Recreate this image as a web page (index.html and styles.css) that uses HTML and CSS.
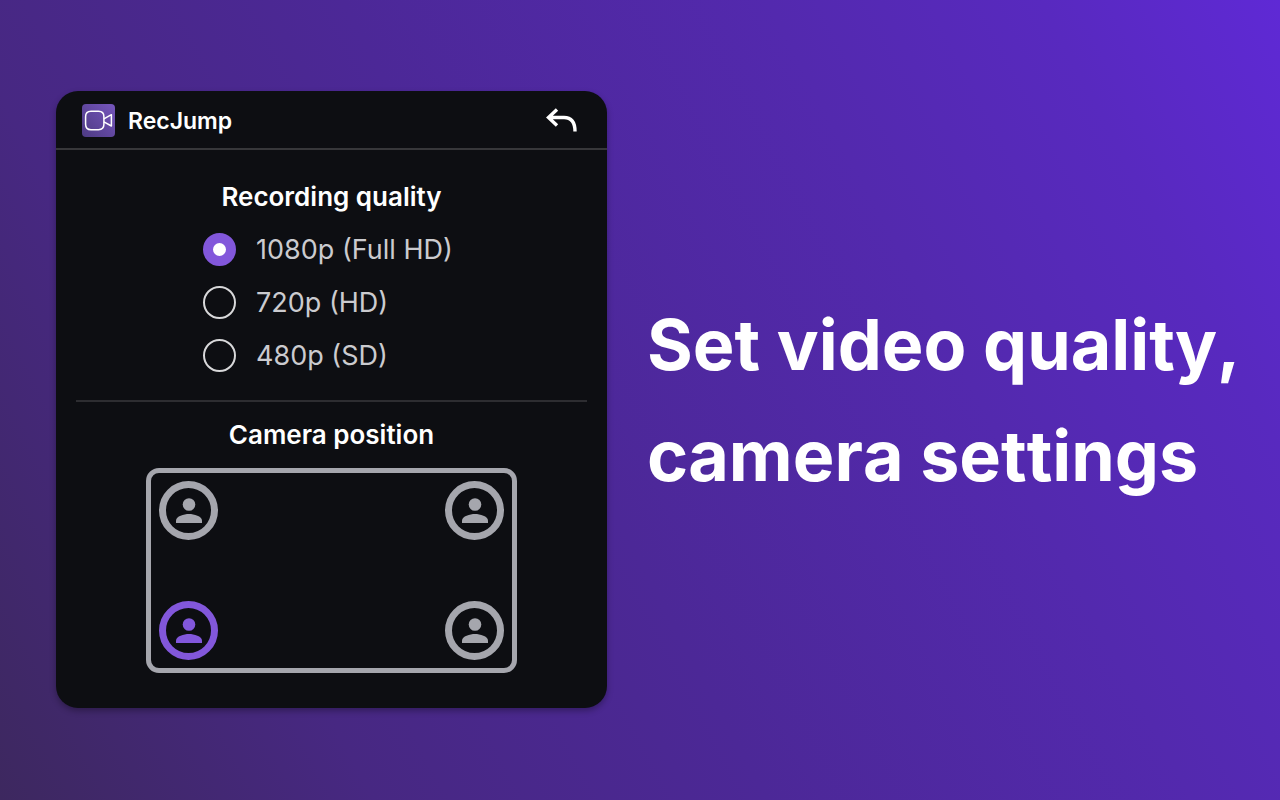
FILE: index.html
```html
<!DOCTYPE html>
<html lang="en">
<head>
	<meta charset="utf-8">
	<meta name="viewport" content="width=device-width, initial-scale=1">
	<title>RecJump</title>
	<link rel="stylesheet" href="styles.css">
</head>
<body>
	<svg class="defs" aria-hidden="true">
		<symbol id="person" viewBox="0 0 26 26">
			<circle cx="13" cy="6.500" r="6.300"/>
			<path d="M0 25v-2.500c0-4.300 8-6.500 13-6.500s13 2.200 13 6.500v2.500z"/>
		</symbol>
	</svg>

	<main class="promo">
		<section class="panel">
			<header class="panel-header">
				<svg class="logo" viewBox="0 0 33 33" aria-hidden="true">
					<defs>
						<linearGradient id="logo-bg" x1="0" y1="1" x2="1" y2="0">
							<stop offset="0" stop-color="#4d3a83"/>
							<stop offset="1" stop-color="#7656bd"/>
						</linearGradient>
					</defs>
					<rect width="33" height="33" rx="4" fill="url(#logo-bg)"/>
					<g fill="none" stroke="#fff" stroke-width="1.500" stroke-linejoin="round">
						<path d="M9 7.300h7.500q5.400 0 5.400 5.400v7.600q0 5.400-5.400 5.400h-7.500q-5.400 0-5.400-5.400v-7.600q0-5.400 5.400-5.400z"/>
						<path d="M21.900 14.800l7.500-4.100v11.300l-7.500-4.100"/>
					</g>
				</svg>
				<span class="name">RecJump</span>
				<button class="back" type="button" aria-label="Back">
					<svg viewBox="0 0 32 26" aria-hidden="true">
						<path d="M11 1.500L2.500 9.500l8.500 8M3 9.500h15q11 0 11 14" fill="none" stroke="#fff" stroke-width="3.400"/>
					</svg>
				</button>
			</header>

			<fieldset class="quality">
				<legend>Recording quality</legend>
				<div class="options">
					<label><input type="radio" name="quality" value="1080" checked>1080p (Full HD)</label>
					<label><input type="radio" name="quality" value="720">720p (HD)</label>
					<label><input type="radio" name="quality" value="480">480p (SD)</label>
				</div>
			</fieldset>

			<section class="camera">
				<h2>Camera position</h2>
				<div class="screen">
					<button type="button" aria-label="Top left"><svg><use href="#person"/></svg></button>
					<button type="button" aria-label="Top right"><svg><use href="#person"/></svg></button>
					<button type="button" aria-label="Bottom left" class="active"><svg><use href="#person"/></svg></button>
					<button type="button" aria-label="Bottom right"><svg><use href="#person"/></svg></button>
				</div>
			</section>
		</section>

		<h1>Set video quality, camera settings</h1>
	</main>
</body>
</html>
```
FILE: styles.css
```css
* {
	box-sizing: border-box;
}

body {
	margin: 0;
	font-family: Inter, "Liberation Sans", sans-serif;
	color: #fff;
}

button {
	padding: 0;
	border: 0;
	background: none;
	cursor: pointer;
}

.defs {
	display: none;
}

.promo {
	display: grid;
	grid-template-columns: minmax(0, 551px) 1fr;
	align-items: center;
	gap: 40px;
	min-height: 100vh;
	padding: 24px 32px 25px 56px;
	background: linear-gradient(62deg, #3d285f 0%, #472882 22%, #4c2897 45%, #5329ae 70%, #5829bf 86%, #5f29d5 100%);
}

.panel {
	border-radius: 22px;
	background: #0d0e12;
	box-shadow: 0 3px 6px rgba(0, 0, 0, 0.3);
}

.panel-header {
	display: flex;
	align-items: center;
	gap: 13px;
	height: 59px;
	padding: 2px 29px 0 26px;
	border-bottom: 2px solid #37373a;
}

.logo {
	width: 33px;
	height: 33px;
}

.name {
	font-size: 23px;
	font-weight: 600;
}

.back {
	margin-left: auto;
}

.back svg {
	display: block;
	width: 32px;
	height: 26px;
}

.quality {
	margin: 0 20px;
	padding: 0 0 28px;
	border: 0;
	border-bottom: 2px solid #2d2d31;
}

legend,
h2 {
	width: 100%;
	margin: 0;
	padding: 0;
	font-size: 26px;
	font-weight: 600;
	line-height: 32px;
	text-align: center;
}

legend {
	padding-top: 31px;
}

.options {
	display: grid;
	gap: 20px;
	width: 257px;
	margin: 20px auto 0;
}

.options label {
	display: flex;
	align-items: center;
	gap: 20px;
	font-size: 27px;
	line-height: 33px;
	color: #cbcbcf;
	white-space: nowrap;
}

.options input {
	appearance: none;
	flex: none;
	width: 33px;
	height: 33px;
	margin: 0;
	border: 2px solid #d8d8da;
	border-radius: 50%;
}

.options input:checked {
	border: 10px solid #8257db;
	background: #fff;
}

.camera {
	padding: 17px 20px 35px;
}

.screen {
	display: grid;
	grid-template-columns: auto auto;
	justify-content: space-between;
	align-content: space-between;
	max-width: 371px;
	height: 205px;
	margin: 17px auto 0;
	padding: 8px;
	border: 5px solid #a5a6ad;
	border-radius: 13px;
}

.screen button {
	display: grid;
	place-items: center;
	width: 59px;
	height: 59px;
	border: 7px solid #a5a6ad;
	border-radius: 50%;
	color: #a5a6ad;
}

.screen button.active {
	border-color: #8257db;
	color: #8257db;
}

.screen svg {
	width: 26px;
	height: 26px;
	fill: currentColor;
}

h1 {
	margin: 0;
	font-size: 70px;
	font-weight: 700;
	font-kerning: none;
	line-height: 111px;
}
```
